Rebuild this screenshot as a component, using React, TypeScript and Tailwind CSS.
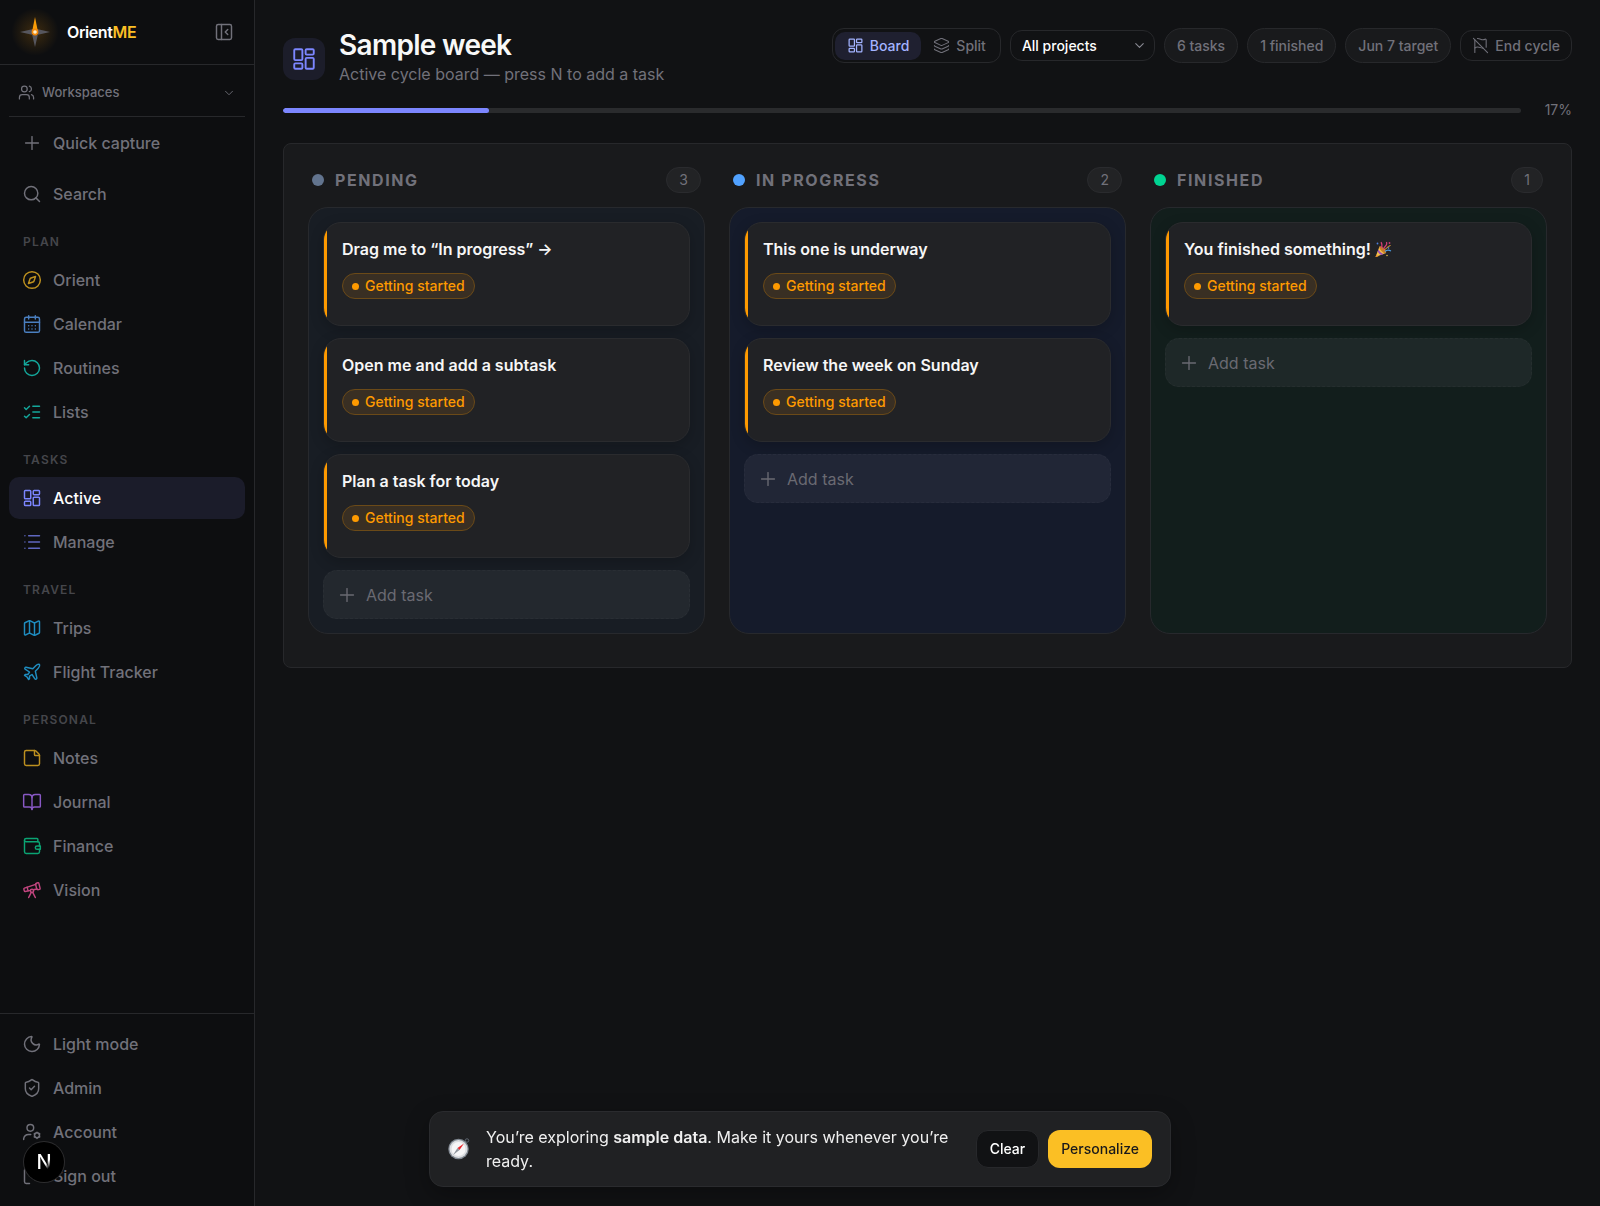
import type { ComponentType, ReactNode } from "react";
import {
  BookOpen,
  CalendarDays,
  ChevronDown,
  Compass,
  FlagOff,
  Layers,
  ListChecks,
  LogOut,
  Map,
  Moon,
  Plane,
  Plus,
  RotateCcw,
  Search,
  ShieldCheck,
  StickyNote,
  Telescope,
  Users,
} from "lucide-react";

interface IconProps {
  size?: number | string;
  strokeWidth?: number | string;
  className?: string;
}

type Icon = ComponentType<IconProps>;

function Glyph({ size = 20, strokeWidth = 1.75, className, children }: IconProps & { children: ReactNode }) {
  return (
    <svg
      width={size}
      height={size}
      viewBox="0 0 24 24"
      fill="none"
      stroke="currentColor"
      strokeWidth={strokeWidth}
      strokeLinecap="round"
      strokeLinejoin="round"
      className={className}
      aria-hidden="true"
    >
      {children}
    </svg>
  );
}

const BoardIcon: Icon = (props) => (
  <Glyph {...props}>
    <rect x="3" y="3" width="7.5" height="10" rx="1" />
    <rect x="13.5" y="3" width="7.5" height="5" rx="1" />
    <rect x="13.5" y="11" width="7.5" height="10" rx="1" />
    <rect x="3" y="16" width="7.5" height="5" rx="1" />
  </Glyph>
);

const ListIcon: Icon = (props) => (
  <Glyph {...props}>
    <path d="M8 4.5h13M8 12h13M8 19.5h13M3.5 4.5h.01M3.5 12h.01M3.5 19.5h.01" />
  </Glyph>
);

const WalletIcon: Icon = (props) => (
  <Glyph {...props}>
    <path d="M19 7V4a1 1 0 0 0-1-1H5a2 2 0 0 0-2 2v14a2 2 0 0 0 2 2h14a2 2 0 0 0 2-2v-3" />
    <path d="M3 5a2 2 0 0 0 2 2h14a2 2 0 0 1 2 2v3" />
    <path d="M22 12h-4a2 2 0 0 0 0 4h4z" />
  </Glyph>
);

const AccountIcon: Icon = (props) => (
  <Glyph {...props}>
    <circle cx="10" cy="7" r="4" />
    <path d="M2 21v-1a6 6 0 0 1 6-5h2.5" />
    <circle cx="18" cy="16" r="3" />
    <path d="M18 12.2v.8M18 19v.8M21.3 14.1l-.7.4M15.4 17.5l-.7.4M21.3 17.9l-.7-.4M15.4 14.5l-.7-.4" />
  </Glyph>
);

const CollapseIcon: Icon = (props) => (
  <Glyph {...props}>
    <rect x="3" y="3" width="18" height="18" rx="2" />
    <path d="M9 3v18M16.5 9 13.500 12l3 3" />
  </Glyph>
);

interface NavEntry {
  label: string;
  icon: Icon;
  color: string;
  active?: boolean;
}

const sections: { title: string; items: NavEntry[] }[] = [
  {
    title: "Plan",
    items: [
      { label: "Orient", icon: Compass, color: "text-[#bd901f]" },
      { label: "Calendar", icon: CalendarDays, color: "text-[#4a7fc0]" },
      { label: "Routines", icon: RotateCcw, color: "text-[#14a79b]" },
      { label: "Lists", icon: ListChecks, color: "text-[#14a79b]" },
    ],
  },
  {
    title: "Tasks",
    items: [
      { label: "Active", icon: BoardIcon, color: "text-[#7c86ff]", active: true },
      { label: "Manage", icon: ListIcon, color: "text-[#5f67c0]" },
    ],
  },
  {
    title: "Travel",
    items: [
      { label: "Trips", icon: Map, color: "text-[#1f8dc0]" },
      { label: "Flight Tracker", icon: Plane, color: "text-[#1f8dc0]" },
    ],
  },
  {
    title: "Personal",
    items: [
      { label: "Notes", icon: StickyNote, color: "text-[#bd901f]" },
      { label: "Journal", icon: BookOpen, color: "text-[#8858c4]" },
      { label: "Finance", icon: WalletIcon, color: "text-[#0ba473]" },
      { label: "Vision", icon: Telescope, color: "text-[#c2457f]" },
    ],
  },
];

const footerItems: NavEntry[] = [
  { label: "Light mode", icon: Moon, color: "" },
  { label: "Admin", icon: ShieldCheck, color: "" },
  { label: "Account", icon: AccountIcon, color: "" },
  { label: "Sign out", icon: LogOut, color: "" },
];

const columns = [
  {
    title: "Pending",
    dot: "bg-[#62748e]",
    body: "bg-[#181d24]",
    add: "bg-[#23282e]",
    tasks: ["Drag me to “In progress” →", "Open me and add a subtask", "Plan a task for today"],
  },
  {
    title: "In progress",
    dot: "bg-[#51a2ff]",
    body: "bg-[#151b2b]",
    add: "bg-[#212636]",
    tasks: ["This one is underway", "Review the week on Sunday"],
  },
  {
    title: "Finished",
    dot: "bg-[#00d492]",
    body: "bg-[#121e1c]",
    add: "bg-[#1e2828]",
    tasks: ["You finished something!"],
    party: true,
  },
];

function Logo() {
  return (
    <div className="grid size-12 place-items-center rounded-full bg-[radial-gradient(circle,rgba(251,158,11,0.2)_0%,rgba(251,158,11,0.07)_45%,transparent_70%)]">
      <svg width="30" height="30" viewBox="0 0 30 30" aria-hidden="true">
        <path d="M15 30l-2.8-12h5.6zM0 15l12-2.8v5.6zM30 15l-12-2.8v5.6z" fill="#56565e" />
        <path d="M15 0l3 15h-6z" fill="#f99c07" />
        <circle cx="15" cy="15" r="3.4" fill="#f58a0b" />
        <circle cx="15" cy="15" r="1.8" fill="#fff3d0" />
      </svg>
    </div>
  );
}

function PartyPopper() {
  return (
    <svg width="17" height="17" viewBox="0 0 34 34" role="img" aria-label="Party popper">
      <path d="M1 32 9 11c4 1 11 7 13 13z" fill="#f6c04a" />
      <path d="M7 17c2 4 6 8 10 9l-4 2c-3-1-6-4-8-7z" fill="#9b4fb5" />
      <path d="M3 27l4 4-6 1z" fill="#e98f2d" />
      <ellipse cx="15.500" cy="17.500" rx="3.500" ry="9" transform="rotate(-43 15.500 17.500)" fill="#c77d26" />
      <path d="M13 14c1-4 2-8-1-12M17 17c1-5 3-6 5-8s2-4 1-7" stroke="#d63f76" strokeWidth="2.500" fill="none" />
      <path d="M20 21c4-4 8-3 12-1" stroke="#4c9be0" strokeWidth="2.500" fill="none" />
      <path d="M19 17c4-1 5-6 12-8" stroke="#f3a93a" strokeWidth="2" fill="none" />
      <circle cx="5" cy="5" r="1.800" fill="#4c7fe0" />
      <circle cx="29" cy="4" r="1.800" fill="#c43b78" />
      <circle cx="27" cy="14" r="1.500" fill="#5aa6f0" />
      <circle cx="24" cy="29" r="1.500" fill="#e8c04a" />
    </svg>
  );
}

function CompassEmoji() {
  return (
    <svg width="22" height="22" viewBox="0 0 44 44" className="shrink-0" aria-hidden="true">
      <circle cx="38" cy="5" r="3.500" fill="none" stroke="#5c646e" strokeWidth="2" />
      <circle cx="21" cy="22" r="20.500" fill="#7f8790" />
      <circle cx="21" cy="22" r="18" fill="#dcdee1" />
      <circle cx="21" cy="22" r="14" fill="#f6f6f7" />
      <path d="M32 11 23 24l-4-4z" fill="#e8252b" />
      <path d="M10 34l9-14 4 4z" fill="#8f959d" />
    </svg>
  );
}

function NavItem({ item }: { item: NavEntry }) {
  const ItemIcon = item.icon;
  return (
    <a
      href="#"
      aria-current={item.active ? "page" : undefined}
      className={`flex h-[42px] items-center gap-[11px] rounded-[10px] px-[13px] text-base font-medium ${
        item.active ? "bg-[#1b1c2a] text-white" : "text-[#71717a]"
      }`}
    >
      <ItemIcon size={20} strokeWidth={1.75} className={`shrink-0 ${item.color}`} />
      {item.label}
    </a>
  );
}

function Sidebar() {
  return (
    <aside className="flex w-[255px] shrink-0 flex-col border-r border-[#27282b] bg-[#0d0e10]">
      <div className="flex h-[65px] items-center border-b border-[#27282b] pr-5 pl-[11px]">
        <Logo />
        <span className="ml-2 flex-1 text-base font-semibold tracking-tight text-white">
          Orient<span className="text-[#fbbf24]">ME</span>
        </span>
        <button type="button" aria-label="Collapse sidebar" className="text-[#71717a]">
          <CollapseIcon size={20} strokeWidth={1.75} />
        </button>
      </div>

      <div className="flex-1 px-[9px]">
        <button
          type="button"
          className="flex h-[52px] w-full items-center gap-[7px] border-b border-[#27282b] px-[9px] pt-1 text-[13px] font-medium text-[#71717a]"
        >
          <Users size={17} strokeWidth={1.75} />
          Workspaces
          <ChevronDown size={14} strokeWidth={1.5} className="ml-auto" />
        </button>

        <div className="flex flex-col gap-[9px] pt-[5px]">
          <button type="button" className="flex h-[42px] items-center gap-2.5 px-3 text-base font-medium text-[#71717a]">
            <Plus size={22} strokeWidth={1.5} />
            Quick capture
          </button>
          <button type="button" className="flex h-[42px] items-center gap-[11px] px-[13px] text-base font-medium text-[#71717a]">
            <Search size={20} strokeWidth={1.75} />
            Search
          </button>
        </div>

        {sections.map((section) => (
          <nav key={section.title} aria-label={section.title} className="flex flex-col gap-0.5">
            <h2 className="mt-[18px] mb-1.5 px-3.5 text-xs leading-[18px] font-semibold tracking-widest text-[#45464b] uppercase">
              {section.title}
            </h2>
            {section.items.map((item) => (
              <NavItem key={item.label} item={item} />
            ))}
          </nav>
        ))}
      </div>

      <div className="flex flex-col gap-0.5 border-t border-[#27282b] p-[9px] text-[#71717a]">
        {footerItems.map((item) => (
          <NavItem key={item.label} item={item} />
        ))}
      </div>
    </aside>
  );
}

function Pill({ children }: { children: ReactNode }) {
  return (
    <span className="flex h-[35px] items-center rounded-full border border-[#27282b] bg-[#191a1c] px-3 text-sm font-medium text-[#71717a]">
      {children}
    </span>
  );
}

function Header() {
  return (
    <header className="flex items-start justify-between">
      <div className="flex items-center gap-3.5">
        <div className="mt-1 grid size-[42px] place-items-center rounded-xl bg-[#1c1d2a] text-[#7c86ff]">
          <BoardIcon size={26} strokeWidth={1.75} />
        </div>
        <div>
          <h1 className="text-[28px] leading-[34px] font-semibold tracking-tight text-[#f8f8f8]">Sample week</h1>
          <p className="text-base leading-6 text-[#71717a]">Active cycle board — press N to add a task</p>
        </div>
      </div>

      <div className="flex items-center gap-[9px]">
        <div className="flex h-[35px] items-center rounded-xl border border-[#27282b] p-0.5 text-sm font-medium">
          <button type="button" className="flex h-7 items-center gap-1.5 rounded-[10px] bg-[#1f2030] px-3 text-[#a3b3ff]">
            <BoardIcon size={17} strokeWidth={1.75} />
            Board
          </button>
          <button type="button" className="flex h-7 items-center gap-1.5 px-3 text-[#71717a]">
            <Layers size={17} strokeWidth={1.5} />
            Split
          </button>
        </div>

        <div className="relative">
          <select
            aria-label="Project"
            className="h-[31px] w-[145px] appearance-none rounded-xl border border-[#27282b] bg-[#111214] px-[11px] text-sm font-medium text-white"
          >
            <option>All projects</option>
          </select>
          <ChevronDown
            size={15}
            strokeWidth={1.75}
            className="pointer-events-none absolute top-2 right-2 text-[#8a8a93]"
          />
        </div>

        <Pill>6 tasks</Pill>
        <Pill>1 finished</Pill>
        <Pill>Jun 7 target</Pill>
        <button
          type="button"
          className="flex h-[31px] items-center gap-1.5 rounded-xl border border-[#27282b] px-[11px] text-sm font-medium text-[#71717a]"
        >
          <FlagOff size={17} strokeWidth={1.5} />
          End cycle
        </button>
      </div>
    </header>
  );
}

function TaskCard({ title, party }: { title: string; party?: boolean }) {
  return (
    <article className="flex h-[104px] overflow-hidden rounded-[18px] border border-[#2a2b2e] bg-[#212225] shadow-[0_4px_14px_rgba(0,0,0,0.2)]">
      <div className="w-[3px] shrink-0 bg-[#fe9a00]" />
      <div className="px-[15px] py-3.5">
        <h3 className="flex items-center gap-1 text-base leading-6 font-semibold text-[#f6f6f6]">
          {title}
          {party && <PartyPopper />}
        </h3>
        <span className="mt-3 inline-flex h-[26px] items-center gap-1.5 rounded-full border border-[#6b4a18] bg-[#392f23] px-[9px] text-sm font-medium text-[#fe9a00]">
          <span className="size-[7px] rounded-full bg-[#fe9a00]" />
          Getting started
        </span>
      </div>
    </article>
  );
}

function Board() {
  return (
    <section className="mt-[23px] grid grid-cols-3 gap-6 rounded-lg border border-[#27282b] bg-[#191a1c] px-6 pt-[23px] pb-[33px]">
      {columns.map((column) => (
        <div key={column.title} className="flex flex-col">
          <div className="mb-3.5 flex items-center px-1">
            <span className={`size-3 rounded-full ${column.dot}`} />
            <h2 className="ml-[11px] text-base leading-6 font-bold tracking-widest text-[#71717a] uppercase">
              {column.title}
            </h2>
            <span className="ml-auto flex h-[26px] items-center rounded-full border border-[#2a2b2e] bg-[#222325] px-3 text-sm text-[#71717a]">
              {column.tasks.length}
            </span>
          </div>
          <div className={`flex flex-1 flex-col gap-3 rounded-[20px] border border-[#27292d] p-3.5 ${column.body}`}>
            {column.tasks.map((task) => (
              <TaskCard key={task} title={task} party={column.party} />
            ))}
            <button
              type="button"
              className={`flex h-[49px] items-center gap-2 rounded-[14px] border border-dashed border-white/3 px-3 text-base text-[#6a6a72] ${column.add}`}
            >
              <Plus size={22} strokeWidth={1.5} />
              Add task
            </button>
          </div>
        </div>
      ))}
    </section>
  );
}

function SampleBanner() {
  return (
    <div className="fixed bottom-[19px] left-1/2 flex w-[742px] max-w-full -translate-x-1/2 items-center gap-4 rounded-[14px] border border-[#2a2b2e] bg-[#202123] px-[18px] py-[13px] shadow-[0_8px_24px_rgba(0,0,0,0.3)]">
      <CompassEmoji />
      <p className="flex-1 text-base leading-6 text-[#f0f0f0]">
        You’re exploring <strong className="font-semibold">sample data</strong>. Make it yours whenever you’re ready.
      </p>
      <div className="flex shrink-0 gap-[9px]">
        <button type="button" className="h-[38px] rounded-xl border border-[#27282b] bg-[#111214] px-[13px] text-sm font-medium text-white">
          Clear
        </button>
        <button type="button" className="h-[38px] rounded-xl bg-[#fbbf24] px-[13px] text-sm font-medium text-[#18181b]">
          Personalize
        </button>
      </div>
    </div>
  );
}

export default function App() {
  return (
    <div className="flex min-h-screen bg-[#111214] font-['Inter','Noto_Sans',sans-serif]">
      <Sidebar />
      <main className="min-w-0 flex-1 px-7 pt-7">
        <Header />
        <div className="mt-3.5 flex items-center gap-6">
          <div
            role="progressbar"
            aria-label="Cycle progress"
            aria-valuenow={17}
            className="h-[5px] flex-1 overflow-hidden rounded-full bg-[#2a2b2d]"
          >
            <div className="h-full w-1/6 rounded-full bg-[#7c86ff]" />
          </div>
          <span className="text-sm text-[#71717a]">17%</span>
        </div>
        <Board />
      </main>

      <SampleBanner />

      <button
        type="button"
        aria-label="Open developer tools"
        className="fixed bottom-6 left-6 grid size-10 place-items-center rounded-full bg-black shadow-[0_0_0_1px_#2c2c2e]"
      >
        <span className="bg-linear-to-br from-white from-60% to-transparent to-80% bg-clip-text text-xl leading-5 font-medium text-transparent">
          N
        </span>
      </button>
    </div>
  );
}
